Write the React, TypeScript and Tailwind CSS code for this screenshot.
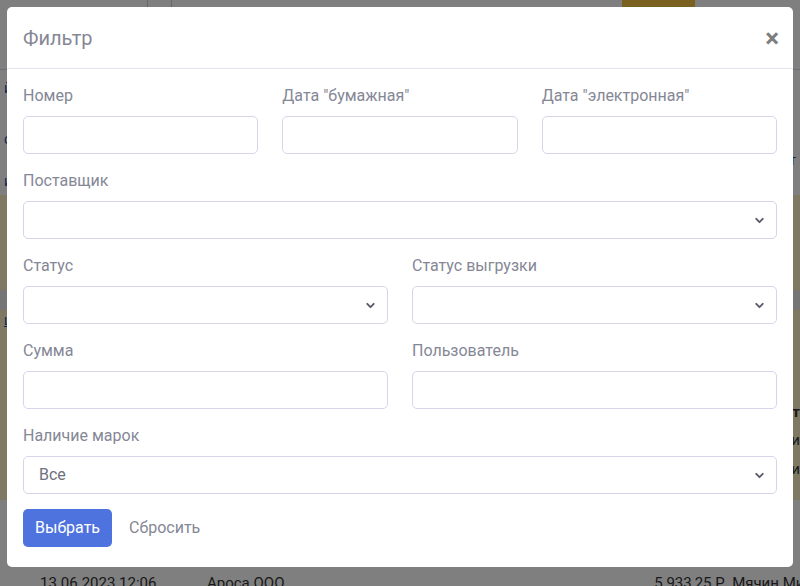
import { ChevronDown } from 'lucide-react';

const Field = ({ label, select, value }: { label: string; select?: boolean; value?: string }) => {
    return (
        <div className="mb-[15px] flex min-w-0 flex-1 flex-col">
            <label className="mb-2 text-[16px] leading-6 text-[#858796]">{label}</label>
            <div className="flex h-[38px] items-center justify-between rounded-[5px] border border-[#d6d5ea] bg-white pl-[15px] pr-[10px] text-[16px] text-[#6e707e]">
                <span>{value}</span>
                {select && <ChevronDown className="h-[13px] w-[13px] text-[#5a5c69]" strokeWidth={3.5} />}
            </div>
        </div>
    );
};

const BackgroundPage = () => {
    return (
        <div className="flex h-full w-full flex-col bg-white text-[14px] text-[#333]">
            <div className="flex h-[70px] border-b border-[#ddd]">
                <div className="w-[148px] border-r border-[#ccc]" />
                <div className="w-[24px] border-r border-[#ccc]" />
                <div className="flex-1" />
                <div className="mr-[105px] mt-[-20px] h-[28px] w-[73px] bg-[#f6c23e]" />
            </div>
            <div className="h-[55px] pl-1 pt-2 text-[#1d4b9e]">й</div>
            <div className="flex h-[70px] flex-col justify-center pl-1 text-[#1d4b9e]">
                <span>о</span>
                <span className="text-right pr-1">т</span>
                <span>ия</span>
            </div>
            <div className="h-[95px] bg-[#fff3c8]" />
            <div className="h-[20px] bg-[#eaeaea]" />
            <div className="h-[30px] bg-[#fff3c8] pl-1 text-[#1d4b9e] underline">щ</div>
            <div className="flex h-[160px] flex-col items-end justify-end gap-[6px] bg-[#fff3c8] pb-[20px] text-[15px]">
                <span className="font-bold">т</span>
                <span>и</span>
                <span>и</span>
            </div>
            <div className="flex h-[86px] items-end whitespace-nowrap pl-[40px] text-[15px] leading-[18px]">
                <span className="mb-[-6px] w-[167px]">13.06.2023 12:06</span>
                <span className="mb-[-6px] flex-1">Ароса ООО</span>
                <span className="mb-[-6px] mr-[-20px]">5 933,25 Р&nbsp;&nbsp;Мячин Миха</span>
            </div>
        </div>
    );
};

const App = () => {
    return (
        <div className="relative h-[586px] w-[800px] overflow-hidden font-['Roboto','Liberation_Sans',sans-serif]">
            <BackgroundPage />
            <div className="absolute inset-0 bg-black/50" />
            <div className="absolute inset-0 pl-[7px] pt-[7px]">
                <div className="flex w-[786px] flex-col rounded-[5px] bg-white">
                    <div className="flex h-[62px] items-center justify-between border-b border-[#e3e6f0] pl-[16px] pr-[16px]">
                        <h5 className="text-[20px] leading-[30px] text-[#858796]">Фильтр</h5>
                        <span className="mr-[-2px] text-[26px] font-bold leading-none text-[#7d7d7d]">×</span>
                    </div>
                    <div className="flex flex-col px-4 pb-5 pt-[15px]">
                        <div className="flex gap-6">
                            <Field label="Номер" />
                            <Field label='Дата "бумажная"' />
                            <Field label='Дата "электронная"' />
                        </div>
                        <Field label="Поставщик" select />
                        <div className="flex gap-6">
                            <Field label="Статус" select />
                            <Field label="Статус выгрузки" select />
                        </div>
                        <div className="flex gap-6">
                            <Field label="Сумма" />
                            <Field label="Пользователь" />
                        </div>
                        <Field label="Наличие марок" select value="Все" />
                        <div className="flex items-center gap-[17px]">
                            <button className="h-[38px] rounded-[5px] bg-[#4e73df] px-3 text-[16px] text-white">
                                Выбрать
                            </button>
                            <span className="text-[16px] text-[#858796]">Сбросить</span>
                        </div>
                    </div>
                </div>
            </div>
        </div>
    );
};

export default App;
